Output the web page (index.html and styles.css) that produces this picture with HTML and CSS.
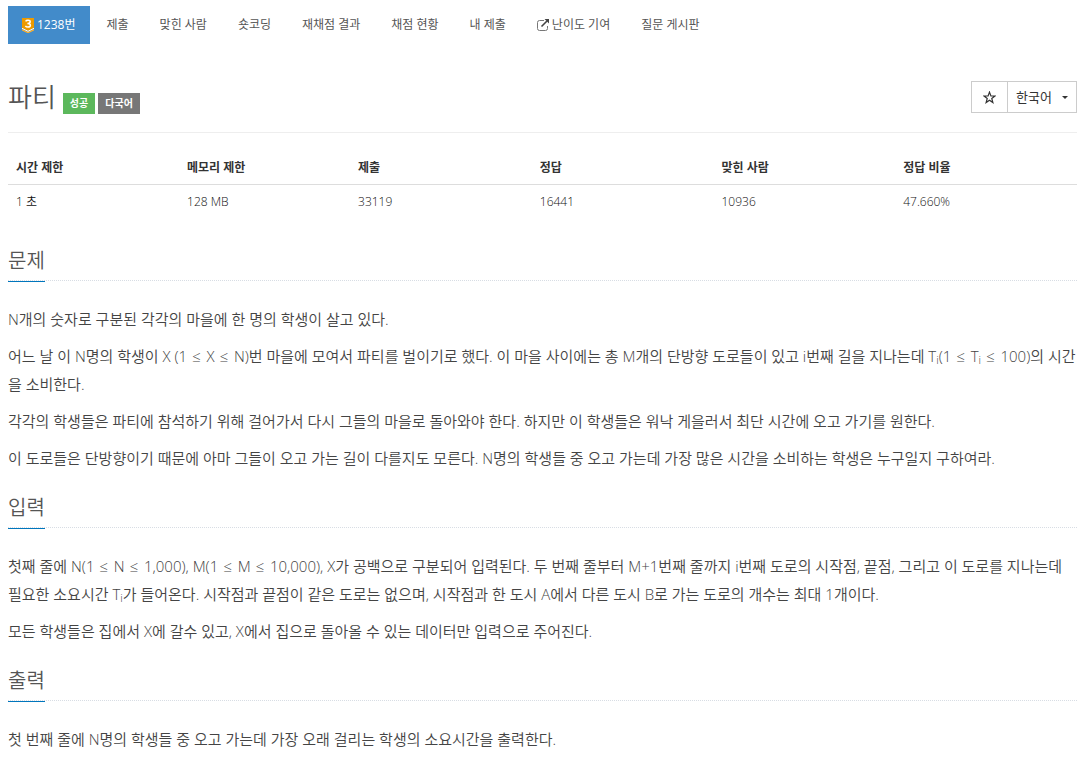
FILE: index.html
```html
<!DOCTYPE html>
<html lang="ko">
<head>
  <meta charset="UTF-8">
  <meta name="viewport" content="width=device-width, initial-scale=1.0">
  <title>1238번: 파티</title>
  <link rel="stylesheet" href="styles.css">
</head>
<body>

  <!-- Problem menu -->
  <nav>
    <ul class="problem-menu">
      <li><a href="#" class="active"><svg class="tier" viewBox="0 0 12 15" aria-hidden="true"><path d="M0 0h12v10l-6 3-6-3z" fill="#ec9a00"/><path d="M0 11l6 3 6-3v1.400L6 15.400 0 12.400z" fill="#ffb028"/><path d="M0 10.300l6 3 6-3" fill="none" stroke="#fff" stroke-width="1"/><path d="M3.600 3.300C4.100 2.500 5 2.200 6 2.200c1.300 0 2.200.6 2.200 1.600S7.300 5.400 5.400 5.400c2 0 3 .6 3 1.800 0 1.100-1 1.800-2.400 1.800-1.100 0-2.100-.4-2.600-1.200" fill="none" stroke="#fff" stroke-width="1.500"/></svg> 1238번</a></li>
      <li><a href="#">제출</a></li>
      <li><a href="#">맞힌 사람</a></li>
      <li><a href="#">숏코딩</a></li>
      <li><a href="#">재채점 결과</a></li>
      <li><a href="#">채점 현황</a></li>
      <li><a href="#">내 제출</a></li>
      <li><a href="#"><svg class="external" viewBox="0 0 12 12" aria-hidden="true"><path d="M7 1.500H2.500Q.5 1.500.5 3.500v6q0 2 2 2h6q2 0 2-2V7" fill="none" stroke="#777" stroke-width="1"/><path d="M4.500 7.500L10 2" stroke="#444" stroke-width="1.600"/><path d="M7.500 0H12v4.500z" fill="#444"/></svg> 난이도 기여</a></li>
      <li><a href="#">질문 게시판</a></li>
    </ul>
  </nav>

  <!-- Title -->
  <header class="page-header">
    <h1>파티</h1>
    <span class="label bg-green">성공</span>
    <span class="label bg-gray">다국어</span>
    <div class="button-group">
      <button type="button" class="button" aria-label="즐겨찾기"><svg class="star" viewBox="0 0 12 12" aria-hidden="true"><path d="M6 1l1.300 3.500 3.700.1-2.900 2.300 1 3.700L6 8.500l-3.100 2.100 1-3.700L1 4.600l3.700-.1z" fill="none" stroke="#333" stroke-width="1.100"/></svg></button>
      <button type="button" class="button">한국어 <span class="caret"></span></button>
    </div>
  </header>

  <table class="table">
    <thead>
      <tr>
        <th class="narrow">시간 제한</th>
        <th class="narrow">메모리 제한</th>
        <th>제출</th>
        <th>정답</th>
        <th>맞힌 사람</th>
        <th>정답 비율</th>
      </tr>
    </thead>
    <tbody>
      <tr>
        <td>1 초</td>
        <td>128 MB</td>
        <td>33119</td>
        <td>16441</td>
        <td>10936</td>
        <td>47.660%</td>
      </tr>
    </tbody>
  </table>

  <section>
    <div class="headline"><h2>문제</h2></div>
    <p>N개의 숫자로 구분된 각각의 마을에 한 명의 학생이 살고 있다.</p>
    <p>어느 날 이 N명의 학생이 X (1 <span class="op">≤</span> X <span class="op">≤</span> N)번 마을에 모여서 파티를 벌이기로 했다. 이 마을 사이에는 총 M개의 단방향 도로들이 있고 i번째 길을 지나는데 T<sub>i</sub>(1 <span class="op">≤</span> T<sub>i</sub> <span class="op">≤</span> 100)의 시간을 소비한다.</p>
    <p>각각의 학생들은 파티에 참석하기 위해 걸어가서 다시 그들의 마을로 돌아와야 한다. 하지만 이 학생들은 워낙 게을러서 최단 시간에 오고 가기를 원한다.</p>
    <p>이 도로들은 단방향이기 때문에 아마 그들이 오고 가는 길이 다를지도 모른다. N명의 학생들 중 오고 가는데 가장 많은 시간을 소비하는 학생은 누구일지 구하여라.</p>
  </section>

  <section>
    <div class="headline"><h2>입력</h2></div>
    <p>첫째 줄에 N(1 <span class="op">≤</span> N <span class="op">≤</span> 1,000), M(1 <span class="op">≤</span> M <span class="op">≤</span> 10,000), X가 공백으로 구분되어 입력된다. 두 번째 줄부터 M+1번째 줄까지 i번째 도로의 시작점, 끝점, 그리고 이 도로를 지나는데 필요한 소요시간 T<sub>i</sub>가 들어온다. 시작점과 끝점이 같은 도로는 없으며, 시작점과 한 도시 A에서 다른 도시 B로 가는 도로의 개수는 최대 1개이다.</p>
    <p>모든 학생들은 집에서 X에 갈수 있고, X에서 집으로 돌아올 수 있는 데이터만 입력으로 주어진다.</p>
  </section>

  <section>
    <div class="headline"><h2>출력</h2></div>
    <p>첫 번째 줄에 N명의 학생들 중 오고 가는데 가장 오래 걸리는 학생의 소요시간을 출력한다.</p>
  </section>

</body>
</html>
```
FILE: styles.css
```css
* {
  box-sizing: border-box;
}

body {
  font-family: "Open Sans", "Noto Sans CJK KR", sans-serif;
  font-size: 12px;
  line-height: 18px;
  color: #333;
  background-color: #fff;
  margin: 0;
  padding: 6px 12px 0 8px;
}

/* Problem menu */
.problem-menu {
  list-style: none;
  display: flex;
  gap: 3px;
  margin: 0;
  padding: 0;
}

.problem-menu a {
  display: flex;
  align-items: center;
  gap: 3px;
  height: 38px;
  padding: 0 14px;
  color: #555;
  text-decoration: none;
  white-space: nowrap;
}

.problem-menu a:hover {
  background: #eee;
}

.problem-menu a.active {
  background: #428bca;
  color: #fff;
}

.tier {
  width: 12px;
  height: 15px;
}

.external {
  width: 12px;
  height: 12px;
}

/* Title */
.page-header {
  display: flex;
  align-items: flex-end;
  gap: 3px;
  margin-top: 36px;
  padding-bottom: 18px;
  border-bottom: 1px solid #eee;
}

.page-header h1 {
  margin: 0 4px 0 0;
  font-size: 26px;
  line-height: 34px;
  font-weight: 350;
  color: #555;
}

.label {
  padding: 0 7px;
  font-size: 10px;
  line-height: 21px;
  font-weight: 700;
  color: #fff;
}

.bg-green {
  background-color: #5cb85c;
}

.bg-gray {
  background-color: #777;
}

.button-group {
  display: flex;
  align-self: center;
  margin-left: auto;
}

.button {
  display: flex;
  align-items: center;
  gap: 10px;
  height: 32px;
  padding: 0 8px;
  border: 1px solid #ccc;
  background: #fff;
  color: #333;
  font-family: inherit;
  font-size: 13px;
  line-height: 18px;
  cursor: pointer;
}

.button:first-child {
  padding: 0 11px;
  border-right: none;
}

.star {
  width: 13px;
  height: 13px;
}

.caret {
  border-top: 3px solid #333;
  border-left: 3px solid transparent;
  border-right: 3px solid transparent;
}

/* Problem info */
.table {
  width: 100%;
  margin: 17px 0 25px;
  border-collapse: collapse;
  table-layout: fixed;
}

.table th,
.table td {
  width: 17%;
  padding: 8px;
  text-align: left;
}

.table th {
  padding: 9px 8px 7px;
  border-bottom: 1px solid #ddd;
}

.table .narrow {
  width: 16%;
}

.table td {
  font-weight: 350;
  color: #111;
}

/* Problem text */
.headline {
  display: flex;
  margin: 19px 0 24px;
  border-bottom: 1px dotted #d8dde4;
}

.headline h2 {
  margin: 0 0 -2px;
  padding-bottom: 3px;
  border-bottom: 1px solid #0076bd;
  font-size: 20px;
  line-height: 34px;
  font-weight: 350;
  color: #555;
}

p {
  margin: 0 0 9px;
  font-size: 15px;
  line-height: 28px;
  font-weight: 350;
  color: #444;
}

.op {
  padding: 0 2px 0 1px;
}

sub {
  font-size: 11px;
  line-height: 0;
  vertical-align: -2px;
}
```
